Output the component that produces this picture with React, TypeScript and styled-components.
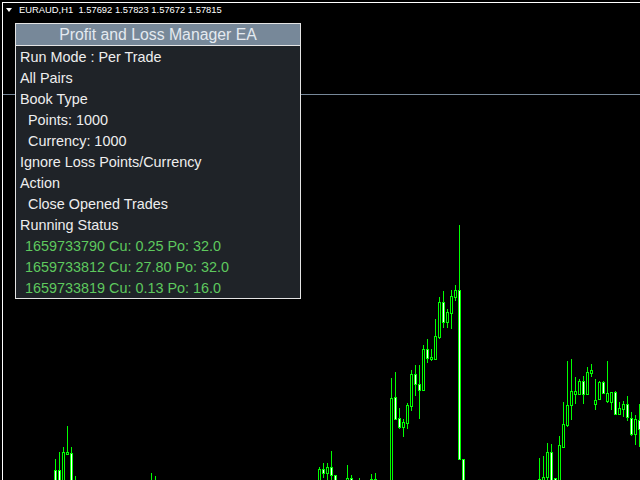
import styled, { createGlobalStyle } from "styled-components";

const GlobalStyle = createGlobalStyle`
  html, body {
    margin: 0;
    padding: 0;
    background: #000;
  }
`;

// left, wickTop, wickBottom, bodyTop, bodyBottom, bear
type Candle = [number, number, number, number, number, boolean];

const candles: Candle[] = [
  [54, 459, 480, 470, 481, true],
  [58, 452, 480, 470, 481, true],
  [62, 447, 480, 452, 481, false],
  [66, 426, 455, 452, 455, false],
  [70, 447, 480, 453, 481, true],
  [74, 476, 480, 481, 482, false],
  [150, 473, 480, 481, 482, false],
  [154, 476, 480, 481, 482, false],
  [318, 467, 480, 469, 481, false],
  [322, 463, 478, 469, 474, true],
  [326, 463, 480, 467, 474, false],
  [330, 451, 480, 467, 476, true],
  [334, 475, 480, 475, 481, true],
  [346, 465, 480, 478, 481, false],
  [350, 475, 480, 478, 481, true],
  [358, 478, 480, 481, 482, false],
  [370, 474, 480, 479, 481, false],
  [374, 473, 480, 479, 481, false],
  [390, 378, 480, 398, 481, false],
  [394, 372, 420, 397, 420, true],
  [398, 408, 429, 418, 428, true],
  [402, 419, 437, 422, 428, false],
  [406, 403, 429, 405, 424, false],
  [410, 370, 411, 374, 407, false],
  [414, 365, 396, 374, 385, true],
  [418, 365, 419, 384, 391, true],
  [422, 345, 390, 349, 391, false],
  [426, 339, 363, 349, 359, true],
  [430, 349, 361, 357, 360, false],
  [434, 319, 359, 336, 360, false],
  [438, 297, 339, 302, 338, false],
  [442, 291, 328, 302, 323, true],
  [446, 309, 328, 312, 323, false],
  [450, 290, 329, 296, 314, false],
  [454, 285, 301, 290, 298, false],
  [458, 225, 459, 290, 460, true],
  [462, 459, 480, 459, 481, true],
  [538, 458, 480, 479, 481, false],
  [542, 456, 480, 477, 481, false],
  [546, 443, 480, 452, 478, false],
  [550, 444, 480, 452, 481, true],
  [554, 478, 480, 478, 481, true],
  [558, 436, 480, 445, 481, false],
  [562, 402, 448, 424, 448, false],
  [566, 361, 427, 405, 426, false],
  [570, 359, 420, 391, 406, false],
  [574, 377, 404, 391, 395, false],
  [578, 379, 395, 381, 395, false],
  [582, 376, 404, 381, 395, true],
  [586, 367, 394, 372, 395, false],
  [590, 364, 377, 370, 374, false],
  [594, 379, 410, 400, 405, false],
  [598, 381, 400, 382, 400, false],
  [602, 381, 394, 382, 394, true],
  [606, 361, 403, 393, 402, false],
  [610, 392, 410, 392, 403, false],
  [614, 391, 415, 392, 415, true],
  [618, 402, 415, 408, 415, false],
  [622, 401, 417, 404, 410, false],
  [626, 396, 421, 404, 418, true],
  [630, 412, 436, 418, 435, true],
  [634, 415, 445, 419, 435, false],
  [638, 404, 447, 420, 430, true],
];

const rows: { text: string; indent?: number; green?: boolean }[] = [
  { text: "Run Mode : Per Trade" },
  { text: "All Pairs" },
  { text: "Book Type" },
  { text: "Points: 1000", indent: 8 },
  { text: "Currency: 1000", indent: 8 },
  { text: "Ignore Loss Points/Currency" },
  { text: "Action" },
  { text: "Close Opened Trades", indent: 8 },
  { text: "Running Status" },
  { text: "1659733790 Cu: 0.25 Po: 32.0", indent: 5, green: true },
  { text: "1659733812 Cu: 27.80 Po: 32.0", indent: 5, green: true },
  { text: "1659733819 Cu: 0.13 Po: 16.0", indent: 5, green: true },
];

const Screen = styled.div`
  position: relative;
  width: 640px;
  height: 480px;
  box-sizing: border-box;
  padding: 2px 0 0 2px;
  background: #000;
  overflow: hidden;
  display: flex;
`;

const ChartFrame = styled.div`
  flex: 1;
  border-top: 1px solid #fff;
  border-left: 1px solid #fff;
`;

const ChartSvg = styled.svg`
  display: block;
`;

const SymbolLabel = styled.div`
  position: absolute;
  top: 4px;
  left: 6px;
  display: flex;
  align-items: center;
  gap: 7px;
  color: #fff;
  font-family: "Liberation Sans", Arial, sans-serif;
  font-size: 9.4px;
  white-space: pre;
`;

const DownArrow = styled.span`
  width: 0;
  height: 0;
  border-left: 3px solid transparent;
  border-right: 3px solid transparent;
  border-top: 4px solid #fff;
`;

const Panel = styled.div`
  position: absolute;
  top: 23px;
  left: 15px;
  width: 284px;
  border: 1px solid #e4e4e4;
  background: #1f2328;
  font-family: "Liberation Sans", Arial, sans-serif;
`;

const PanelTitle = styled.div`
  height: 21px;
  line-height: 22px;
  background: #778899;
  border-bottom: 1px solid #e4e4e4;
  color: #e4eaf0;
  font-size: 15.8px;
  text-align: center;
  overflow: hidden;
`;

const PanelRow = styled.div<{ $indent: number; $green: boolean }>`
  height: 21px;
  line-height: 23px;
  padding-left: ${(p) => 4 + p.$indent}px;
  color: ${(p) => (p.$green ? "#5ec95e" : "#eeeeee")};
  font-size: 14.4px;
  white-space: nowrap;
  overflow: hidden;
`;

const GREEN = "#00ff00";

const App = () => (
  <>
    <GlobalStyle />
    <Screen>
      <ChartFrame>
        <ChartSvg
          width={637}
          height={477}
          viewBox="3 3 637 477"
          shapeRendering="crispEdges"
        >
          <line x1={3} y1={94.5} x2={640} y2={94.5} stroke="#778899" strokeWidth={1} />
          {candles.map(([left, wt, wb, bt, bb, bear]) => (
            <g key={left}>
              <line
                x1={left + 1.5}
                y1={wt}
                x2={left + 1.5}
                y2={wb}
                stroke={GREEN}
                strokeWidth={1}
              />
              <rect
                x={left + 0.5}
                y={bt + 0.5}
                width={2}
                height={Math.max(bb - bt - 1, 0.5)}
                fill={bear ? "#fff" : "#000"}
                stroke={GREEN}
                strokeWidth={1}
              />
            </g>
          ))}
        </ChartSvg>
      </ChartFrame>
      <SymbolLabel>
        <DownArrow />
        <span>{"EURAUD,H1  1.57692 1.57823 1.57672 1.57815"}</span>
      </SymbolLabel>
      <Panel>
        <PanelTitle>Profit and Loss Manager EA</PanelTitle>
        {rows.map((r) => (
          <PanelRow key={r.text} $indent={r.indent ?? 0} $green={!!r.green}>
            {r.text}
          </PanelRow>
        ))}
      </Panel>
    </Screen>
  </>
);

export default App;
